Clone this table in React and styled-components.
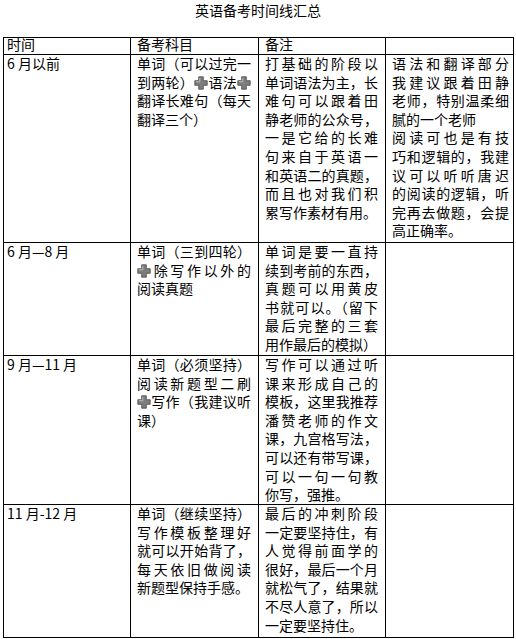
import React from 'react'
import styled, { createGlobalStyle } from 'styled-components'

const GlobalStyle = createGlobalStyle`
  html, body {
    margin: 0;
    padding: 0;
    background: #fff;
  }
  body {
    font-family: "Noto Sans CJK SC", "Noto Sans", sans-serif;
    color: #000;
  }
`

const rows = [
  {
    time: '6 月以前',
    subject: [['单词（可以过完一', '到两轮）➕语法➕', '翻译长难句（每天', '翻译三个）']],
    note: [['打基础的阶段以', '单词语法为主，长', '难句可以跟着田', '静老师的公众号，', '一是它给的长难', '句来自于英语一', '和英语二的真题，', '而且也对我们积', '累写作素材有用。']],
    extra: [
      ['语法和翻译部分', '我建议跟着田静', '老师，特别温柔细', '腻的一个老师'],
      ['阅读可也是有技', '巧和逻辑的，我建', '议可以听听唐迟', '的阅读的逻辑，听', '完再去做题，会提', '高正确率。'],
    ],
  },
  {
    time: '6 月—8 月',
    subject: [['单词（三到四轮）', '➕除写作以外的', '阅读真题']],
    note: [['单词是要一直持', '续到考前的东西，', '真题可以用黄皮', '书就可以。（留下', '最后完整的三套', '用作最后的模拟）']],
    extra: [],
  },
  {
    time: '9 月—11 月',
    subject: [['单词（必须坚持）', '阅读新题型二刷', '➕写作（我建议听', '课）']],
    note: [['写作可以通过听', '课来形成自己的', '模板，这里我推荐', '潘赞老师的作文', '课，九宫格写法，', '可以还有带写课，', '可以一句一句教', '你写，强推。']],
    extra: [],
  },
  {
    time: '11 月-12 月',
    subject: [['单词（继续坚持）', '写作模板整理好', '就可以开始背了，', '每天依旧做阅读', '新题型保持手感。']],
    note: [['最后的冲刺阶段', '一定要坚持住，有', '人觉得前面学的', '很好，最后一个月', '就松气了，结果就', '不尽人意了，所以', '一定要坚持住。']],
    extra: [],
  },
]

// grey "heavy plus" glyph as it shows in the document
const PlusIcon = () => (
  <PlusSvg viewBox="0 0 14 14" aria-hidden="true">
    <path
      d="M4.7 0.8h4.6v3.9h3.9v4.6H9.3v3.9H4.7V9.3H0.8V4.7h3.9z"
      fill="#7d7d7d"
      stroke="#474747"
      strokeWidth="0.8"
    />
    <path d="M5.8 1.9v3.9H1.9" fill="none" stroke="#bdbdbd" strokeWidth="1" />
  </PlusSvg>
)

const renderLine = (text) => {
  const parts = text.split('➕')
  return parts.map((part, i) => (
    <React.Fragment key={i}>
      {i > 0 && <PlusIcon />}
      {part}
    </React.Fragment>
  ))
}

const CellText = ({ paragraphs }) => (
  <Lines>
    {paragraphs.map((para, p) =>
      para.map((line, i) => (
        <Line key={p + '-' + i} $justify={i < para.length - 1}>
          {renderLine(line)}
        </Line>
      ))
    )}
  </Lines>
)

const App = () => {
  return (
    <Page>
      <GlobalStyle />
      <Title>英语备考时间线汇总</Title>
      <Grid>
        <Cell $first $head><HeadText>时间</HeadText></Cell>
        <Cell $head><HeadText>备考科目</HeadText></Cell>
        <Cell $head><HeadText>备注</HeadText></Cell>
        <Cell $head $last />

        {rows.map((row) => (
          <React.Fragment key={row.time}>
            <Cell $first><Lines>{row.time}</Lines></Cell>
            <Cell><CellText paragraphs={row.subject} /></Cell>
            <Cell><CellText paragraphs={row.note} /></Cell>
            <Cell $last><CellText paragraphs={row.extra} /></Cell>
          </React.Fragment>
        ))}
      </Grid>
    </Page>
  )
}

export default App

const Page = styled.div`
  width: 516px;
`

const Title = styled.h1`
  margin: 0;
  font-size: 14px;
  font-weight: 400;
  line-height: 20px;
  text-align: center;
`

const Grid = styled.div`
  display: grid;
  grid-template-columns: 127px 128px 127px 128px;
  grid-template-rows: 17px 188px 113px 149px 133px;
  width: max-content;
  margin: 17px 0 0 3px;
  border-left: 1px solid #000;
  border-top: 1px solid #000;
`

const Cell = styled.div`
  border-right: 1px solid #000;
  border-bottom: 1px solid #000;
  padding: 0 ${(p) => (p.$last ? 4 : 7)}px 0 ${(p) => (p.$first ? 3 : 6)}px;
  font-size: 14px;
  line-height: ${(p) => (p.$head ? 16 : 18.6)}px;
  white-space: nowrap;
  min-width: 0;
`

const HeadText = styled.div`
  margin-top: -2px;
`

const Lines = styled.div`
  margin-top: -1px;
`

const Line = styled.div`
  text-align: ${(p) => (p.$justify ? 'justify' : 'left')};
  text-align-last: ${(p) => (p.$justify ? 'justify' : 'left')};
  text-justify: inter-character;
  white-space: normal;
`

const PlusSvg = styled.svg`
  display: inline-block;
  width: 14px;
  height: 14px;
  vertical-align: -2px;
`
